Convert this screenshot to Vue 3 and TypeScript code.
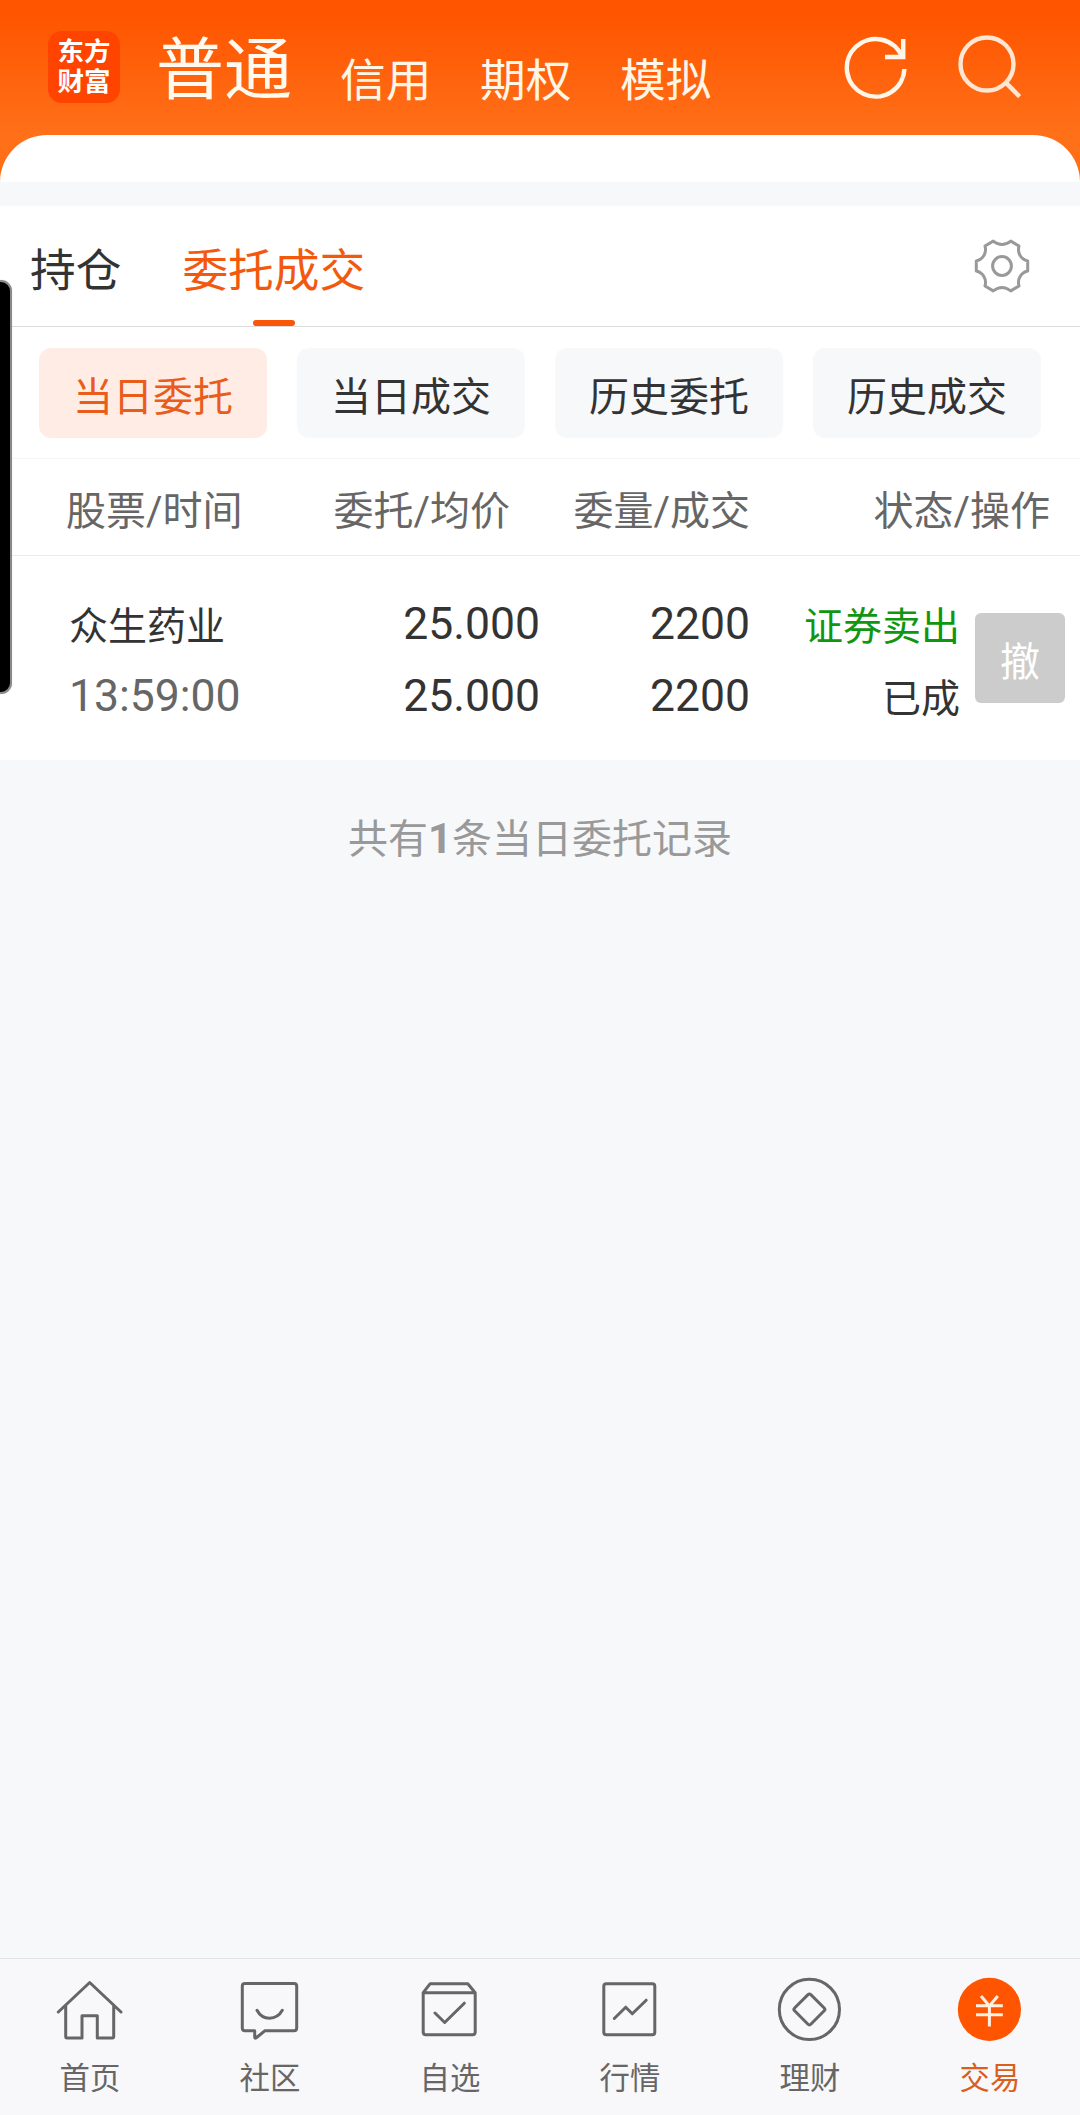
<script setup lang="ts">
import { ref } from 'vue'

interface Order {
  name: string
  time: string
  price: string
  average: string
  amount: string
  filled: string
  side: string
  status: string
}

const accounts: string[] = ['信用', '期权', '模拟']
const filters: string[] = ['当日委托', '当日成交', '历史委托', '历史成交']
const activeFilter = ref(0)

const orders: Order[] = [
  {
    name: '众生药业',
    time: '13:59:00',
    price: '25.000',
    average: '25.000',
    amount: '2200',
    filled: '2200',
    side: '证券卖出',
    status: '已成',
  },
]
</script>

<template>
  <div class="screen">
    <header class="top">
      <div class="bar">
        <div class="logo"><span>东方</span><span>财富</span></div>
        <h1 class="current">普通</h1>
        <nav class="accounts">
          <a v-for="a in accounts" :key="a">{{ a }}</a>
        </nav>
        <svg class="refresh" width="64" height="64" viewBox="844 36 64 64" fill="none" stroke="#fff6ea" stroke-width="4.5">
          <path d="M904.4 69A28.8 28.8 0 1 1 902.4 57.2" />
          <path d="M903.2 39V57.1H885" />
        </svg>
        <svg class="search" width="64" height="64" viewBox="957 34 64 64" fill="none" stroke="#ffe6d2" stroke-width="4.4">
          <circle cx="987" cy="64" r="26.5" />
          <path d="M1005.8 82.6L1019.6 96.6" />
        </svg>
      </div>
      <div class="sheet"></div>
    </header>

    <main>
      <section class="tabs">
        <a class="tab">持仓</a>
        <a class="tab on">委托成交</a>
        <svg class="gear" width="56" height="56" viewBox="-28 -28 56 56" fill="none" stroke="#999" stroke-width="3" stroke-linejoin="round">
          <path d="M-8.8 -24.9Q0 -18 8.8 -24.9L17 -20C15 -13 19 -6.5 25.7 -5V5C19 6.5 15 13 17 20L8.8 24.9Q0 18 -8.8 24.9L-17 20C-15 13 -19 6.5 -25.7 5V-5C-19 -6.5 -15 -13 -17 -20Z" />
          <circle r="9.4" />
        </svg>
      </section>

      <section class="filters">
        <button
          v-for="(f, i) in filters"
          :key="f"
          class="chip"
          :class="{ on: i === activeFilter }"
          @click="activeFilter = i"
        >{{ f }}</button>
      </section>

      <section class="grid head">
        <span class="c1">股票/时间</span>
        <span class="c2">委托/均价</span>
        <span class="c3">委量/成交</span>
        <span class="c4">状态/操作</span>
      </section>

      <section v-for="o in orders" :key="o.name" class="grid order">
        <div class="c1">
          <p><span class="han">{{ o.name }}</span></p>
          <p class="time">{{ o.time }}</p>
        </div>
        <div class="c2"><p>{{ o.price }}</p><p>{{ o.average }}</p></div>
        <div class="c3"><p>{{ o.amount }}</p><p>{{ o.filled }}</p></div>
        <div class="c4">
          <p><span class="han sell">{{ o.side }}</span></p>
          <p><span class="han">{{ o.status }}</span></p>
        </div>
        <button class="cancel">撤</button>
      </section>
    </main>

    <p class="summary">共有<b>{{ orders.length }}</b>条当日委托记录</p>

    <footer class="dock">
      <a class="item">
        <svg width="68" height="68" viewBox="56 35 68 68"><path d="M58.3 72L89.7 42.5L121 72M65.7 66V96.5Q65.7 97.9 67 97.9H82V75.7H97.3V97.9H112.4Q113.7 97.9 113.7 96.5V66" /></svg>
        <span>首页</span>
      </a>
      <a class="item">
        <svg width="68" height="68" viewBox="236 35 68 68"><path d="M245 43.6H294Q296.7 43.6 296.7 46.3V88Q296.7 90.7 294 90.7H265L256 98Q254.7 98.6 254.7 97V90.7H245Q242.3 90.7 242.3 88V46.3Q242.3 43.6 245 43.6ZM257 70.3C262.5 80.8 276.5 80.8 282.3 70.3" /></svg>
        <span>社区</span>
      </a>
      <a class="item">
        <svg width="68" height="68" viewBox="416 35 68 68"><path d="M423.2 52.7L430.2 43.7H467.8L475.2 52.7V92Q475.2 94.7 472.5 94.7H425.9Q423.2 94.7 423.2 92ZM423.2 52.7H475.2M435 73L444.7 82.5L464.3 63.2" /></svg>
        <span>自选</span>
      </a>
      <a class="item">
        <svg width="68" height="68" viewBox="596 35 68 68"><rect x="603.8" y="43.7" width="51" height="51" rx="2.5" /><path d="M614.3 78.5L625.7 67.2L632.3 73.8L646.2 60.2" /></svg>
        <span>行情</span>
      </a>
      <a class="item">
        <svg width="68" height="68" viewBox="776 35 68 68"><circle cx="809.4" cy="69.4" r="30.1" /><path d="M810.8 54.6L824.2 68Q825.6 69.4 824.2 70.8L810.8 84.2Q809.4 85.6 808 84.2L794.6 70.8Q793.2 69.4 794.6 68L808 54.6Q809.4 53.2 810.8 54.6Z" /></svg>
        <span>理财</span>
      </a>
      <a class="item on">
        <svg width="68" height="68" viewBox="956 35 68 68"><circle class="coin" cx="989.4" cy="69.4" r="31.6" /><path class="yen" d="M981 56L989.4 66L997.8 56M976 65.8H1002.8M976 74.7H1002.8M989.4 66V86.6" /></svg>
        <span>交易</span>
      </a>
    </footer>

    <div class="edge-handle"></div>
  </div>
</template>

<style>
body {
  margin: 0;
  background: #f7f8fa;
}
</style>

<style scoped>
.screen {
  position: relative;
  display: flex;
  flex-direction: column;
  width: 1080px;
  height: 2115px;
  overflow: hidden;
  background: #f7f8fa;
  color: #333;
  font-family: Roboto, 'Noto Sans CJK SC', sans-serif;
}
p, h1 {
  margin: 0;
  font-weight: 400;
}
button {
  border: 0;
  padding: 0;
  font-family: inherit;
}
svg {
  display: block;
  flex: none;
}
.top {
  height: 182px;
  flex: none;
  background: linear-gradient(#ff5500 0, #ff5500 15px, #ff7019 135px, #ff6d14 182px);
}
.bar {
  display: flex;
  align-items: flex-end;
  height: 135px;
  padding: 0 59px 23px 48px;
  box-sizing: border-box;
}
.logo {
  display: flex;
  flex-direction: column;
  align-items: center;
  justify-content: center;
  width: 72px;
  height: 72px;
  margin-bottom: 9px;
  border-radius: 14px;
  background: #ff4400;
  color: #fff;
  font-weight: 700;
  font-size: 26.5px;
  line-height: 30px;
  box-sizing: border-box;
}
.current {
  margin: 0 0 1px 36px;
  color: #fffaf0;
  font-size: 68px;
  line-height: 80px;
}
.accounts {
  display: flex;
  gap: 48.6px;
  margin-left: 48px;
  color: #fff6e6;
  font-size: 45.7px;
  line-height: 60px;
}
.refresh {
  margin: 0 0 12px auto;
}
.search {
  margin: 0 0 14px 49px;
}
.sheet {
  height: 47px;
  border-radius: 47px 47px 0 0;
  background: #fff;
}
main {
  margin-top: 24px;
  background: #fff;
}
.tabs {
  display: flex;
  align-items: flex-start;
  height: 120px;
  padding: 0 50px 0 30px;
  border-bottom: 1px solid #dcdcdc;
}
.tab {
  display: flex;
  flex-direction: column;
  align-items: center;
  padding-top: 36px;
  font-size: 45.7px;
  line-height: 60px;
}
.tab.on {
  margin-left: 61px;
  color: #f2590f;
}
.tab.on::after {
  content: '';
  width: 42px;
  height: 6px;
  margin-top: 18px;
  border-radius: 3px;
  background: #f9560a;
}
.gear {
  margin: 32px 0 0 auto;
}
.filters {
  display: flex;
  gap: 30px;
  padding: 21px 39px 20px;
  border-bottom: 1px solid #f5f5f5;
}
.chip {
  width: 228px;
  height: 90px;
  padding-top: 10px;
  border-radius: 12px;
  background: #f7f8fa;
  color: #333;
  font-size: 40px;
  line-height: 80px;
}
.chip.on {
  background: #ffede5;
  color: #e95c1b;
}
.grid {
  display: grid;
  grid-template-columns: 240px 231px 210px 210px 90px;
  padding-left: 69px;
}
.c2, .c3, .c4 {
  text-align: right;
}
.head {
  grid-template-columns: 240px 204px 240px 300px;
  height: 87px;
  padding: 9px 0 0 66px;
  border-bottom: 1px solid #ebebeb;
  color: #666;
  font-size: 40px;
  line-height: 87px;
}
.order {
  height: 172px;
  padding-top: 32px;
  font-size: 44.5px;
  line-height: 72px;
}
.order .time {
  color: #666;
}
.han {
  font-size: 39px;
  line-height: 1;
  vertical-align: -1px;
}
.sell {
  color: #119611;
}
.cancel {
  height: 90px;
  margin: 25px -15px 0 15px;
  padding-top: 10px;
  border-radius: 6px;
  background: #ccc;
  color: #fff;
  font-size: 40px;
  line-height: 80px;
}
.summary {
  flex: 1;
  padding-top: 50px;
  color: #999;
  font-size: 40px;
  line-height: 60px;
  text-align: center;
}
.summary b {
  font-size: 42px;
  line-height: 1;
}
.dock {
  display: grid;
  grid-template-columns: repeat(6, 180px);
  height: 156px;
  border-top: 1px solid #e2e3e5;
  background: #f8f8fa;
}
.item {
  display: flex;
  flex-direction: column;
  align-items: center;
  padding-top: 16px;
  color: #666;
  font-size: 30.4px;
  line-height: 40px;
}
.item svg {
  fill: none;
  stroke: #666;
  stroke-width: 3;
  stroke-linecap: round;
  stroke-linejoin: round;
}
.item span {
  margin-top: 16px;
}
.item.on {
  color: #d9601c;
}
.item .coin {
  fill: #ff5500;
  stroke: none;
}
.item .yen {
  stroke: #fff0e2;
  stroke-linecap: butt;
  stroke-linejoin: miter;
}
.edge-handle {
  position: absolute;
  left: -23px;
  top: 280px;
  width: 31px;
  height: 410px;
  border: 2px solid #8a8a8a;
  border-radius: 0 11px 11px 0;
  background: #000;
  box-shadow: 0 0 1px #bbb;
}
</style>
